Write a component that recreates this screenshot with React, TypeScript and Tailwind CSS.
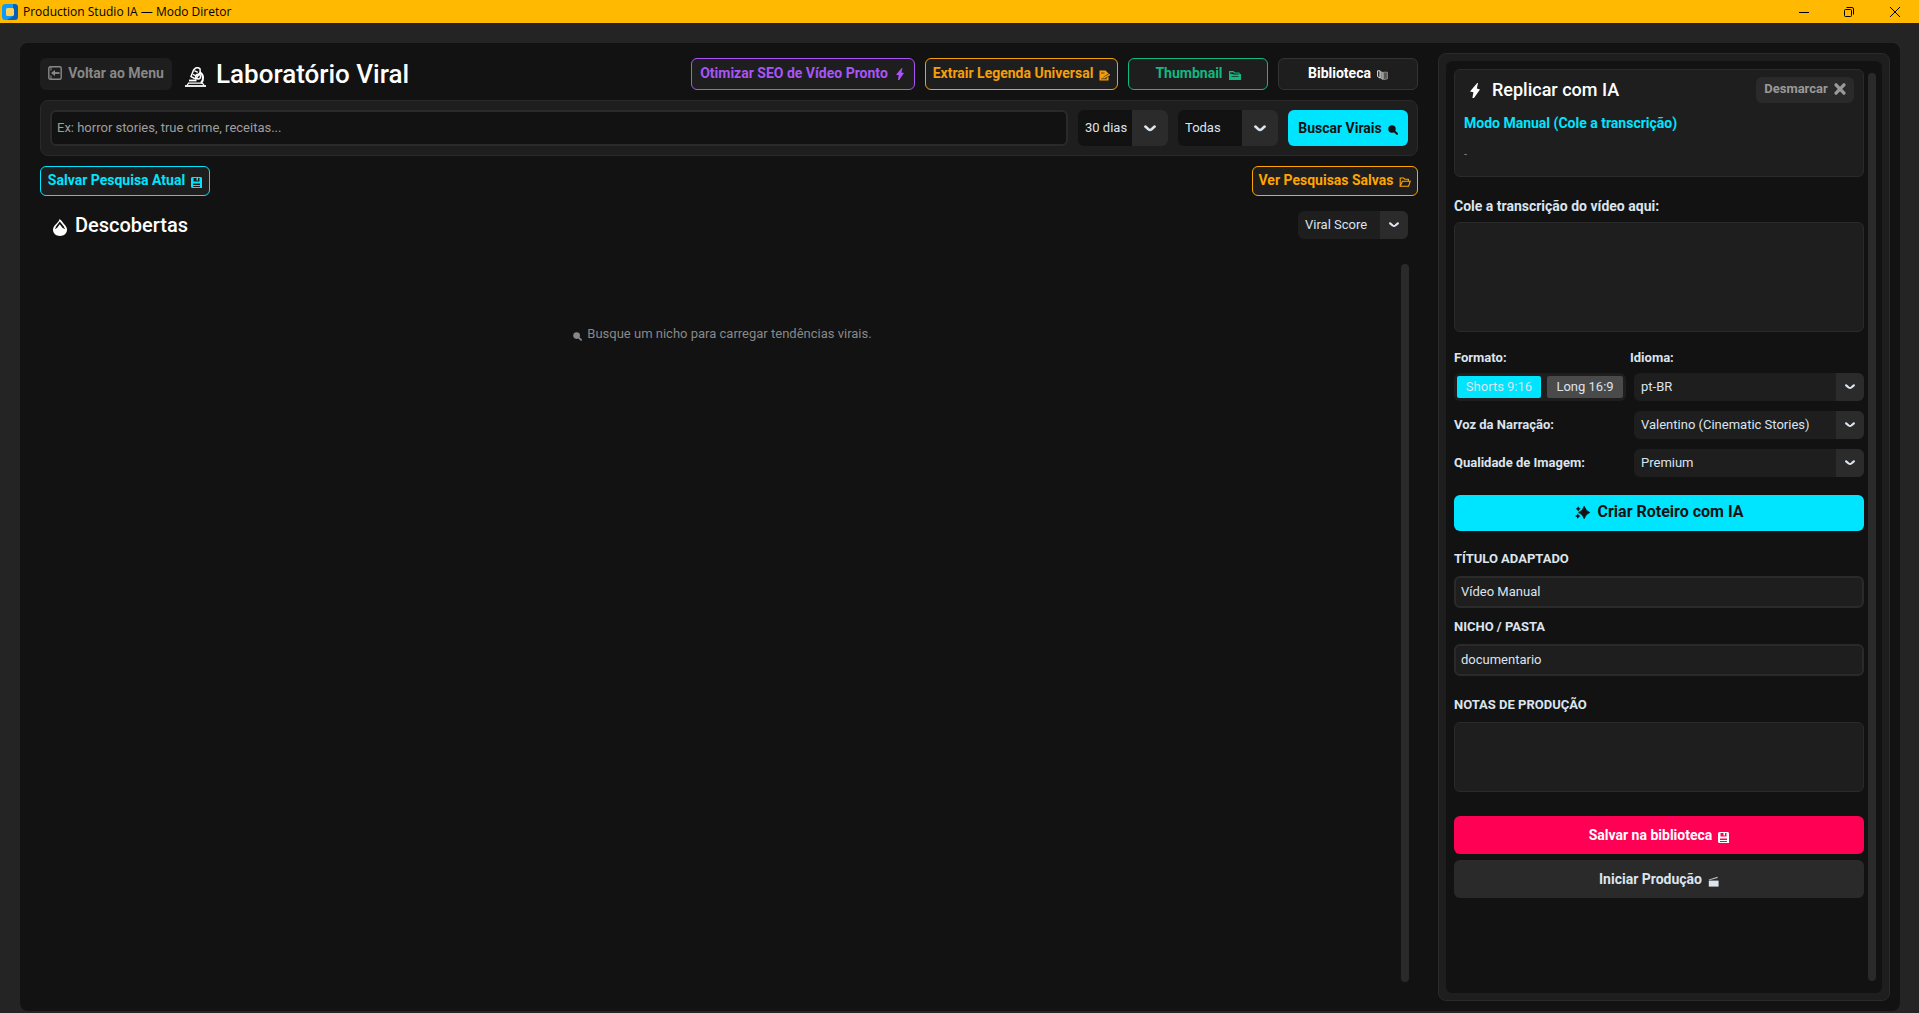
import React, { useState } from 'react';

interface SelectFieldProps {
  id: string;
  label?: string;
  value: string;
  options: string[];
  onChange: (value: string) => void;
  className: string;
  fieldClass: string;
  arrowClass: string;
}

interface IconProps {
  className?: string;
}

const Chevron: React.FC<IconProps> = ({ className }) => (
  <svg className={className} viewBox="0 0 12 7" fill="none" stroke="#dce4ee" strokeWidth="2.6" strokeLinecap="round" strokeLinejoin="round">
    <path d="M1.4 1.6 L4.4 4.2 Q6 5.4 7.6 4.2 L10.6 1.6" />
  </svg>
);

const BoltIcon: React.FC<IconProps> = ({ className }) => (
  <svg className={className} viewBox="0 0 10 15" fill="currentColor">
    <path d="M7.2 0 L0 8.4 L3.4 9.2 L2.4 15 L4 15 L10 6.4 L6.8 5.6 L8 0 Z" />
  </svg>
);

const FloppyIcon: React.FC<IconProps> = ({ className }) => (
  <svg className={className} viewBox="0 0 11 11">
    <path fill="currentColor" fillRule="evenodd" d="M1 0 H10 L11 1 V11 H1 L0 10 V1 Z M2.5 1 V4.5 H8.5 V1 H7 V3.5 H5.5 V1 Z M2 6.5 V8 H9 V6.5 Z M2 9 V10 H9 V9 Z" />
  </svg>
);

const SearchIcon: React.FC<IconProps> = ({ className }) => (
  <svg className={className} viewBox="0 0 10 10">
    <circle cx="4" cy="4" r="3.7" fill="currentColor" />
    <path d="M6 6 L9 8.8" stroke="currentColor" strokeWidth="2" strokeLinecap="round" />
  </svg>
);

const BackIcon: React.FC<IconProps> = ({ className }) => (
  <svg className={className} viewBox="0 0 14 14" fill="none" stroke="currentColor" strokeWidth="1.4">
    <rect x="0.8" y="0.8" width="12.4" height="12.4" rx="1.5" />
    <path d="M3 1 V4.5 M3 9.5 V13" strokeWidth="1" />
    <path d="M11.5 7 H5" strokeWidth="1.8" />
    <path d="M7 4 L3 7 L7 10 Z" fill="currentColor" stroke="none" />
  </svg>
);

const MicroscopeIcon: React.FC<IconProps> = ({ className }) => (
  <svg className={className} viewBox="0 0 21 20" fill="none" stroke="currentColor" strokeWidth="1.5">
    <path d="M0 19 H21" strokeWidth="1.8" />
    <path d="M2 18.5 L3.5 16.2 H17.5 L19 18.5" strokeWidth="1.2" />
    <path d="M4 13.5 H11.5" strokeWidth="1.8" />
    <path d="M10.5 1.2 Q12.8 -0.2 15 1.8 L15.2 5.2 L10.8 12 L6 9.6 L8.6 3 Z" />
    <path d="M9.4 3.6 L12.8 5.4 M8 7.4 L11 9" strokeWidth="1.2" />
    <path d="M14.8 5.4 C18.6 7.6 19.2 12.6 16 16" strokeWidth="2" />
    <circle cx="13.2" cy="9.6" r="2.4" />
  </svg>
);

const FireIcon: React.FC<IconProps> = ({ className }) => (
  <svg className={className} viewBox="0 0 14 17">
    <path fill="currentColor" fillRule="evenodd" d="M6.5 0 C9 1.5 9.5 3.4 11 5 C13 7.2 14 8.8 14 10.8 C14 14.4 11 17 7 17 C3 17 0 14.4 0 10.8 C0 8 1.6 6.4 3.4 4.7 C5 3.2 6.2 1.8 6.5 0 Z M6.8 2.6 L3 7.4 L2 10.2 L4.2 8.8 L6.8 5.2 L9.4 8.8 L12 10.2 L10.8 7.4 Z" />
  </svg>
);

const NoteIcon: React.FC<IconProps> = ({ className }) => (
  <svg className={className} viewBox="0 0 11 11">
    <path fill="currentColor" d="M0.5 0.5 H6.5 L9.5 3.5 V10.5 H0.5 Z" />
    <path d="M2 3 H5.5 M2 8.8 H8" stroke="#1e1e1e" strokeWidth="0.7" />
    <path d="M5 8 L10.2 4.6" stroke="#1e1e1e" strokeWidth="2.6" />
    <path d="M4.8 7.8 L10.8 4.4" stroke="currentColor" strokeWidth="1.5" />
  </svg>
);

const CardBoxIcon: React.FC<IconProps> = ({ className }) => (
  <svg className={className} viewBox="0 0 12 10">
    <path fill="currentColor" fillRule="evenodd" d="M0 1 H4.5 L6 2.5 H10.5 V4 H12 V10 H0 Z M1 2.4 V3.5 L5 4.5 H9.5 V3.5 H5.5 L4 2.2 Z M2.5 6.2 V7 H9.5 V6.2 Z" />
  </svg>
);

const BooksIcon: React.FC<IconProps> = ({ className }) => (
  <svg className={className} viewBox="0 0 11 10">
    <path d="M0.6 0.8 H3 V8 L0.6 6.5 Z" fill="none" stroke="#dce4ee" />
    <path d="M3.5 1.5 L6 2.5 V9.4 L3.5 8.2 Z" fill="#8a8a8a" stroke="#c9c9c9" strokeWidth="0.6" />
    <path d="M6.5 2.2 H10.4 V8.8 L6.5 9.6 Z" fill="#5c5650" stroke="#a39c94" strokeWidth="0.8" />
  </svg>
);

const OpenFolderIcon: React.FC<IconProps> = ({ className }) => (
  <svg className={className} viewBox="0 0 12 10" fill="none" stroke="currentColor" strokeWidth="1.1">
    <path d="M1.2 9.2 V1 H4.6 L5.8 2.2 H9.4 V4" />
    <path d="M1.2 9.2 L3.4 4.2 H11.3 L9.6 9.2 Z" />
  </svg>
);

const CloseIcon: React.FC<IconProps> = ({ className }) => (
  <svg className={className} viewBox="0 0 12 12" stroke="currentColor" strokeWidth="3.2" strokeLinecap="round">
    <path d="M2 1.8 L10 10.2 M10 1.8 L2 10.2" />
  </svg>
);

const SparklesIcon: React.FC<IconProps> = ({ className }) => (
  <svg className={className} viewBox="0 0 15 13" fill="currentColor">
    <path d="M9.2 0.3 Q10.6 5 14.8 6.5 Q10.6 8 9.2 12.7 Q7.8 8 3.6 6.5 Q7.8 5 9.2 0.3 Z" stroke="currentColor" strokeWidth="0.8" />
    <path d="M3.2 0.2 Q3.8 2.2 5.8 2.8 Q3.8 3.4 3.2 5.4 Q2.6 3.4 0.6 2.8 Q2.6 2.2 3.2 0.2 Z" />
    <path d="M2.8 7.4 Q3.4 9.5 5.6 10.1 Q3.4 10.7 2.8 12.8 Q2.2 10.7 0 10.1 Q2.2 9.5 2.8 7.4 Z" />
  </svg>
);

const ClapperIcon: React.FC<IconProps> = ({ className }) => (
  <svg className={className} viewBox="0 0 11 11" fill="currentColor">
    <path d="M0.8 4.6 H10.6 V10.6 H0.8 Z" />
    <path d="M0.8 3.4 L9.4 0.8 L9.8 2 L1.2 4.3 Z" opacity="0.8" />
  </svg>
);

const SelectField: React.FC<SelectFieldProps> = ({ id, label, value, options, onChange, className, fieldClass, arrowClass }) => (
  <div className={`relative overflow-hidden rounded-md ${className}`}>
    <select
      id={id}
      aria-label={label}
      value={value}
      onChange={(e) => onChange(e.target.value)}
      className={`h-full w-full appearance-none pl-[7px] text-[13px] text-[#dce4ee] focus:outline-none ${fieldClass}`}
    >
      {options.map((option) => (
        <option key={option}>{option}</option>
      ))}
    </select>
    <span className={`pointer-events-none absolute inset-y-0 right-0 flex items-center justify-center bg-[#2b2b2b] ${arrowClass}`}>
      <Chevron className={id === 'period' || id === 'duration' ? 'w-3' : 'w-[10px]'} />
    </span>
  </div>
);

const TitleBar: React.FC = () => (
  <header className="flex h-[23px] items-center justify-between bg-[#ffb900] text-black">
    <div className="flex items-center gap-[5px] pl-0.5">
      <svg className="h-4 w-4" viewBox="0 0 16 16">
        <rect width="16" height="16" rx="3.5" fill="#0d9bff" />
        <path d="M11 0 H12.5 A3.5 3.5 0 0 1 16 3.5 V12.5 A3.5 3.5 0 0 1 12.5 16 H5 L11 12 Z" fill="#0660b8" />
        <rect x="4" y="4" width="8" height="8" rx="1.5" fill="#ffd257" />
      </svg>
      <span className="font-['Open_Sans',sans-serif] text-[12px] leading-4">Production Studio IA — Modo Diretor</span>
    </div>
    <div className="flex items-center">
      {/* Minimize */}
      <button type="button" aria-label="Minimizar" className="flex h-[23px] w-[45px] items-center justify-center">
        <svg className="h-[10px] w-[10px]" viewBox="0 0 10 10" stroke="currentColor">
          <path d="M0 5.5 H10" />
        </svg>
      </button>
      {/* Restore */}
      <button type="button" aria-label="Restaurar" className="flex h-[23px] w-[45px] items-center justify-center">
        <svg className="h-[10px] w-[10px]" viewBox="0 0 10 10" fill="none" stroke="currentColor">
          <rect x="0.5" y="2.5" width="7" height="7" rx="1" />
          <path d="M2.5 0.5 H8 A1.5 1.5 0 0 1 9.5 2 V7.5" />
        </svg>
      </button>
      {/* Close */}
      <button type="button" aria-label="Fechar" className="flex h-[23px] w-12 items-center justify-center">
        <svg className="h-[10px] w-[10px]" viewBox="0 0 10 10" stroke="currentColor">
          <path d="M0 0 L10 10 M10 0 L0 10" />
        </svg>
      </button>
    </div>
  </header>
);

const outlineButton = 'flex items-center justify-center gap-1.5 rounded-md border bg-[#1e1e1e] pb-0.5 text-[14px] font-bold';

const Discovery: React.FC = () => {
  const [query, setQuery] = useState('');
  const [period, setPeriod] = useState('30 dias');
  const [duration, setDuration] = useState('Todas');
  const [sort, setSort] = useState('Viral Score');

  return (
    <section className="flex min-w-0 flex-1 flex-col pt-[5px]">
      {/* Header */}
      <div className="flex h-8 items-center gap-[10px]">
        <button type="button" className="flex h-8 w-[132px] items-center justify-center gap-1.5 rounded-md bg-[#1e1e1e] pb-0.5 text-[14px] font-bold text-[#888888]">
          <BackIcon className="h-[14px] w-[14px]" />
          Voltar ao Menu
        </button>
        <h1 className="flex flex-1 items-center gap-[10px] pl-[3px] text-[26px] font-medium leading-8 text-white">
          <MicroscopeIcon className="mt-1.5 h-5 w-[21px]" />
          Laboratório Viral
        </h1>
        <button type="button" className={`${outlineButton} h-8 w-[224px] border-[#a855f7] text-[#a855f7]`}>
          Otimizar SEO de Vídeo Pronto
          <BoltIcon className="mt-0.5 h-3 w-3" />
        </button>
        <button type="button" className={`${outlineButton} h-8 w-[193px] border-[#f59e0b] text-[#f59e0b]`}>
          Extrair Legenda Universal
          <NoteIcon className="mt-1 h-[11px] w-[11px]" />
        </button>
        <button type="button" className={`${outlineButton} h-8 w-[140px] border-[#10b981] text-[#10b981]`}>
          Thumbnail
          <CardBoxIcon className="mt-1 h-[10px] w-3" />
        </button>
        <button type="button" className={`${outlineButton} h-8 w-[140px] border-[#333333] text-white`}>
          Biblioteca
          <BooksIcon className="mt-1 h-[10px] w-[11px]" />
        </button>
      </div>

      {/* Search bar */}
      <div className="mt-[10px] flex gap-[10px] rounded-lg border border-[#2a2a2a] bg-[#1e1e1e] p-[9px]">
        <input
          type="text"
          aria-label="Nicho"
          value={query}
          onChange={(e) => setQuery(e.target.value)}
          placeholder="Ex: horror stories, true crime, receitas..."
          className="h-9 min-w-0 flex-1 rounded-md border-2 border-[#2a2a2a] bg-[#121212] px-[5px] pb-0.5 text-[13px] text-white placeholder:text-[#9e9e9e] focus:outline-none"
        />
        <SelectField
          id="period"
          label="Período"
          value={period}
          options={['7 dias', '30 dias', '90 dias']}
          onChange={setPeriod}
          className="h-9 w-[90px]"
          fieldClass="bg-[#121212]"
          arrowClass="w-9"
        />
        <SelectField
          id="duration"
          label="Duração"
          value={duration}
          options={['Todas', 'Shorts', 'Longos']}
          onChange={setDuration}
          className="h-9 w-[100px]"
          fieldClass="bg-[#121212]"
          arrowClass="w-9"
        />
        <button type="button" className="flex h-9 w-[120px] items-center justify-center gap-1.5 rounded-md bg-[#00e5ff] text-[14px] font-bold text-[#121212]">
          Buscar Virais
          <SearchIcon className="mt-1 h-[10px] w-[10px]" />
        </button>
      </div>

      {/* Saved searches */}
      <div className="mt-[10px] flex justify-between">
        <button type="button" className={`${outlineButton} h-[30px] w-[170px] border-[#00e5ff] text-[#00e5ff]`}>
          Salvar Pesquisa Atual
          <FloppyIcon className="mt-1 h-[11px] w-[11px]" />
        </button>
        <button type="button" className={`${outlineButton} h-[30px] w-[166px] border-[#ffa500] text-[#ffa500]`}>
          Ver Pesquisas Salvas
          <OpenFolderIcon className="mt-1 h-[10px] w-3" />
        </button>
      </div>

      {/* Results */}
      <div className="mt-[15px] flex items-center justify-between pr-[10px] pl-[13px]">
        <h2 className="flex items-center gap-2 text-[20px] font-medium leading-7 text-white">
          <FireIcon className="mt-1 h-[17px] w-[14px]" />
          Descobertas
        </h2>
        <SelectField
          id="sort"
          label="Ordenar por"
          value={sort}
          options={['Viral Score', 'Views', 'Data']}
          onChange={setSort}
          className="h-7 w-[110px]"
          fieldClass="bg-[#1e1e1e]"
          arrowClass="w-7"
        />
      </div>

      <div className="mt-[25px] mb-[19px] flex flex-1 pr-[9px]">
        <p className="flex flex-1 items-center justify-center gap-[5px] self-start pt-[60px] pl-1 text-[13px] leading-5 text-[#888888]">
          <SearchIcon className="mt-1 h-[9px] w-[9px]" />
          Busque um nicho para carregar tendências virais.
        </p>
        <div className="w-2 rounded bg-[#2a2a2a]" />
      </div>
    </section>
  );
};

const ReplicatePanel: React.FC = () => {
  const [transcript, setTranscript] = useState('');
  const [format, setFormat] = useState('Shorts 9:16');
  const [language, setLanguage] = useState('pt-BR');
  const [voice, setVoice] = useState('Valentino (Cinematic Stories)');
  const [quality, setQuality] = useState('Premium');
  const [title, setTitle] = useState('Vídeo Manual');
  const [niche, setNiche] = useState('documentario');
  const [notes, setNotes] = useState('');

  const smallLabel = 'text-[13px] font-bold leading-4 text-[#dce4ee]';
  const textInput = 'h-8 w-full rounded-md border-2 border-[#2a2a2a] bg-[#1e1e1e] px-[5px] pb-0.5 text-[13px] text-[#dce4ee] focus:outline-none';
  const textBox = 'block w-full resize-none rounded-md border border-[#2a2a2a] bg-[#1e1e1e] p-1.5 text-[13px] text-[#dce4ee] focus:outline-none';

  return (
    <aside className="flex w-[452px] shrink-0 rounded-lg border border-[#2a2a2a] bg-[#1e1e1e] p-[7px]">
      <div className="flex flex-1 gap-1 rounded-md bg-[#121212] py-2 pr-1.5 pl-2">
        <div className="flex min-w-0 flex-1 flex-col">
          {/* Selected video */}
          <div className="flex h-[108px] flex-col rounded-md border border-[#2a2a2a] bg-[#1e1e1e] px-[9px] pt-[7px]">
            <div className="flex items-center justify-between">
              <h2 className="flex items-center gap-3 pl-1.5 text-[18px] font-medium leading-6 text-white">
                <BoltIcon className="h-[15px] w-[10px]" />
                Replicar com IA
              </h2>
              <button type="button" className="flex h-[26px] w-[98px] items-center justify-center gap-1.5 rounded-md bg-[#2a2a2a] pb-0.5 text-[13px] font-bold text-[#999999]">
                Desmarcar
                <CloseIcon className="h-3 w-3" />
              </button>
            </div>
            <p className="mt-[10px] text-[14px] font-bold leading-5 text-[#00e5ff]">Modo Manual (Cole a transcrição)</p>
            <p className="mt-[14px] text-[11px] leading-4 text-[#888888]">-</p>
          </div>

          <label htmlFor="transcript" className="mt-[19px] text-[14px] font-bold leading-5 text-[#dce4ee]">
            Cole a transcrição do vídeo aqui:
          </label>
          <textarea
            id="transcript"
            value={transcript}
            onChange={(e) => setTranscript(e.target.value)}
            className={`${textBox} mt-1.5 h-[110px]`}
          />

          {/* Options */}
          <div className="mt-[18px] flex">
            <span id="format-label" className={`${smallLabel} w-44`}>Formato:</span>
            <label htmlFor="language" className={smallLabel}>Idioma:</label>
          </div>
          <div className="mt-[7px] grid grid-cols-[180px_1fr] items-center gap-y-[10px]">
            <div role="group" aria-labelledby="format-label" className="flex h-7 w-[172px] items-center gap-1.5 rounded-md bg-[#1e1e1e] px-[3px] text-[13px] text-[#dce4ee]">
              <button
                type="button"
                onClick={() => setFormat('Shorts 9:16')}
                className={`h-[22px] w-[84px] rounded-xs ${format === 'Shorts 9:16' ? 'bg-[#00e5ff]' : 'bg-[#4a4a4a]'}`}
              >
                Shorts 9:16
              </button>
              <button
                type="button"
                onClick={() => setFormat('Long 16:9')}
                className={`h-[22px] w-[76px] rounded-xs ${format === 'Long 16:9' ? 'bg-[#00e5ff]' : 'bg-[#4a4a4a]'}`}
              >
                Long 16:9
              </button>
            </div>
            <SelectField
              id="language"
              value={language}
              options={['pt-BR', 'en-US', 'es-ES']}
              onChange={setLanguage}
              className="h-7"
              fieldClass="bg-[#1e1e1e]"
              arrowClass="w-7"
            />
            <label htmlFor="voice" className={smallLabel}>Voz da Narração:</label>
            <SelectField
              id="voice"
              value={voice}
              options={['Valentino (Cinematic Stories)']}
              onChange={setVoice}
              className="h-7"
              fieldClass="bg-[#1e1e1e]"
              arrowClass="w-7"
            />
            <label htmlFor="quality" className={smallLabel}>Qualidade de Imagem:</label>
            <SelectField
              id="quality"
              value={quality}
              options={['Premium', 'Standard']}
              onChange={setQuality}
              className="h-7"
              fieldClass="bg-[#1e1e1e]"
              arrowClass="w-7"
            />
          </div>

          <button type="button" className="mt-[18px] flex h-9 items-center justify-center gap-2 rounded-md bg-[#00e5ff] pb-0.5 text-[16px] font-bold text-[#121212]">
            <SparklesIcon className="h-[13px] w-[15px]" />
            Criar Roteiro com IA
          </button>

          <label htmlFor="title" className={`${smallLabel} mt-5`}>TÍTULO ADAPTADO</label>
          <input id="title" type="text" value={title} onChange={(e) => setTitle(e.target.value)} className={`${textInput} mt-[9px]`} />

          <label htmlFor="niche" className={`${smallLabel} mt-[11px]`}>NICHO / PASTA</label>
          <input id="niche" type="text" value={niche} onChange={(e) => setNiche(e.target.value)} className={`${textInput} mt-[9px]`} />

          <label htmlFor="notes" className={`${smallLabel} mt-[21px]`}>NOTAS DE PRODUÇÃO</label>
          <textarea id="notes" value={notes} onChange={(e) => setNotes(e.target.value)} className={`${textBox} mt-[9px] h-[70px]`} />

          {/* Actions */}
          <button type="button" className="mt-6 flex h-[38px] items-center justify-center gap-1.5 rounded-md bg-[#ff0055] text-[14px] font-bold text-white">
            Salvar na biblioteca
            <FloppyIcon className="mt-1 h-[11px] w-[11px]" />
          </button>
          <button type="button" className="mt-1.5 flex h-[38px] items-center justify-center gap-1.5 rounded-md bg-[#2a2a2a] text-[14px] font-bold text-[#dce4ee]">
            Iniciar Produção
            <ClapperIcon className="mt-1 h-[11px] w-[11px]" />
          </button>
        </div>
        <div className="mt-1 mb-1 w-2 rounded bg-[#2a2a2a]" />
      </div>
    </aside>
  );
};

const App: React.FC = () => {
  return (
    <div className="flex min-h-screen flex-col bg-[#242424] font-['Roboto',sans-serif]">
      <TitleBar />
      <main className="mt-5 mr-[19px] mb-0.5 ml-5 flex flex-1 gap-5 rounded-lg bg-[#121212] py-[10px] pr-[10px] pl-5">
        <Discovery />
        <ReplicatePanel />
      </main>
    </div>
  );
};

export default App;
